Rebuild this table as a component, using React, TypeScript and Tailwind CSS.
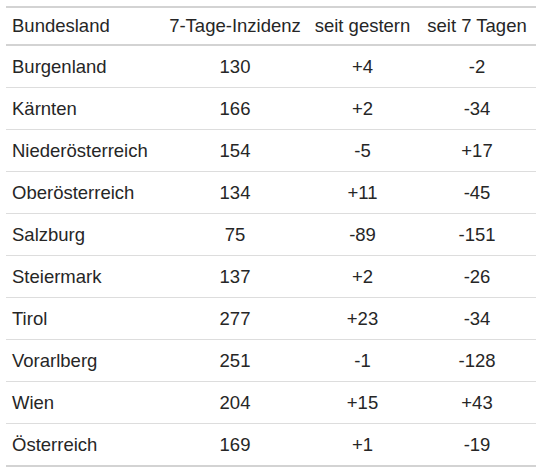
import React from "react";

const rows: [string, string, string, string][] = [
  ["Burgenland", "130", "+4", "-2"],
  ["Kärnten", "166", "+2", "-34"],
  ["Niederösterreich", "154", "-5", "+17"],
  ["Oberösterreich", "134", "+11", "-45"],
  ["Salzburg", "75", "-89", "-151"],
  ["Steiermark", "137", "+2", "-26"],
  ["Tirol", "277", "+23", "-34"],
  ["Vorarlberg", "251", "-1", "-128"],
  ["Wien", "204", "+15", "+43"],
  ["Österreich", "169", "+1", "-19"],
];

export default function App() {
  return (
    <div className="w-[542px] h-[473px] bg-white pt-[6px] pl-[6px] text-[#262626] text-[18.5px]" style={{ fontFamily: '"Liberation Sans", Arial, sans-serif' }}>
      <div className="w-[530px]">
        <div className="grid grid-cols-[157px_144px_111px_118px] items-center h-[40px] border-t-2 border-b-2 border-[#d3d3d3]">
          <div className="pl-[6px] whitespace-nowrap">Bundesland</div>
          <div className="text-center whitespace-nowrap">7-Tage-Inzidenz</div>
          <div className="text-center whitespace-nowrap">seit gestern</div>
          <div className="text-center whitespace-nowrap">seit 7 Tagen</div>
        </div>
        {rows.map((r, i) => {
          const last = i === rows.length - 1;
          return (
            <div
              key={r[0]}
              className={
                last
                  ? "grid grid-cols-[157px_144px_111px_118px] items-center h-[43px] border-b-2 border-[#d3d3d3]"
                  : "grid grid-cols-[157px_144px_111px_118px] items-center h-[42px] border-b border-[#dddddd]"
              }
            >
              <div className="pl-[6px] whitespace-nowrap">{r[0]}</div>
              <div className="text-center">{r[1]}</div>
              <div className="text-center">{r[2]}</div>
              <div className="text-center">{r[3]}</div>
            </div>
          );
        })}
      </div>
    </div>
  );
}
